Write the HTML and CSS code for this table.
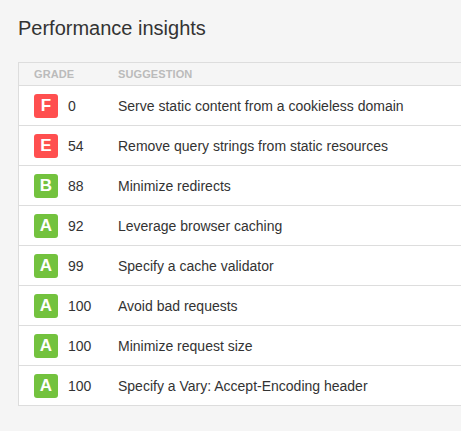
FILE: index.html
```html
<!DOCTYPE html>
<html>
<head>
<meta charset="utf-8">
<link rel="stylesheet" href="styles.css">
</head>
<body>
<div class="page">
  <h1 class="title">Performance insights</h1>
  <div class="table">
    <div class="head">
      <div class="c-grade">Grade</div>
      <div class="c-sugg">Suggestion</div>
    </div>
    <div class="row"><div class="c-grade"><span class="badge bad">F</span><span class="num">0</span></div><div class="c-sugg">Serve static content from a cookieless domain</div></div>
    <div class="row"><div class="c-grade"><span class="badge bad">E</span><span class="num">54</span></div><div class="c-sugg">Remove query strings from static resources</div></div>
    <div class="row"><div class="c-grade"><span class="badge good">B</span><span class="num">88</span></div><div class="c-sugg">Minimize redirects</div></div>
    <div class="row"><div class="c-grade"><span class="badge good">A</span><span class="num">92</span></div><div class="c-sugg">Leverage browser caching</div></div>
    <div class="row"><div class="c-grade"><span class="badge good">A</span><span class="num">99</span></div><div class="c-sugg">Specify a cache validator</div></div>
    <div class="row"><div class="c-grade"><span class="badge good">A</span><span class="num">100</span></div><div class="c-sugg">Avoid bad requests</div></div>
    <div class="row"><div class="c-grade"><span class="badge good">A</span><span class="num">100</span></div><div class="c-sugg">Minimize request size</div></div>
    <div class="row"><div class="c-grade"><span class="badge good">A</span><span class="num">100</span></div><div class="c-sugg">Specify a Vary: Accept-Encoding header</div></div>
  </div>
</div>
</body>
</html>
```
FILE: styles.css
```css
html, body {
  margin: 0;
  padding: 0;
  overflow: hidden;
  background: #f5f5f5;
}
body {
  font-family: "Liberation Sans", Arial, sans-serif;
  color: #333;
}
.page {
  padding: 16px 0 0 18px;
  width: 520px;
}
.title {
  margin: 0 0 22px;
  font-size: 20px;
  font-weight: normal;
  line-height: 24px;
  color: #333;
}
.table {
  border: 1px solid #ddd;
  border-right: none;
}
.head {
  display: flex;
  align-items: center;
  height: 22px;
  border-bottom: 1px solid #ddd;
  font-size: 11px;
  font-weight: bold;
  text-transform: uppercase;
  color: #bbb;
  letter-spacing: 0.1px;
}
.row {
  display: flex;
  align-items: center;
  height: 39px;
  background: #fff;
  border-bottom: 1px solid #ddd;
  font-size: 14px;
}
.row:last-child {
  border-bottom: none;
}
.c-grade {
  width: 99px;
  padding-left: 15px;
  display: flex;
  align-items: center;
  box-sizing: border-box;
  flex-shrink: 0;
}
.c-sugg {
  flex: 1;
}
.badge {
  width: 24px;
  height: 24px;
  border-radius: 3px;
  color: #fff;
  font-weight: bold;
  font-size: 17px;
  line-height: 24px;
  text-align: center;
  margin-right: 10px;
}
.bad { background: #ff4f4f; }
.good { background: #73c23e; }
.num { color: #333; }
```
